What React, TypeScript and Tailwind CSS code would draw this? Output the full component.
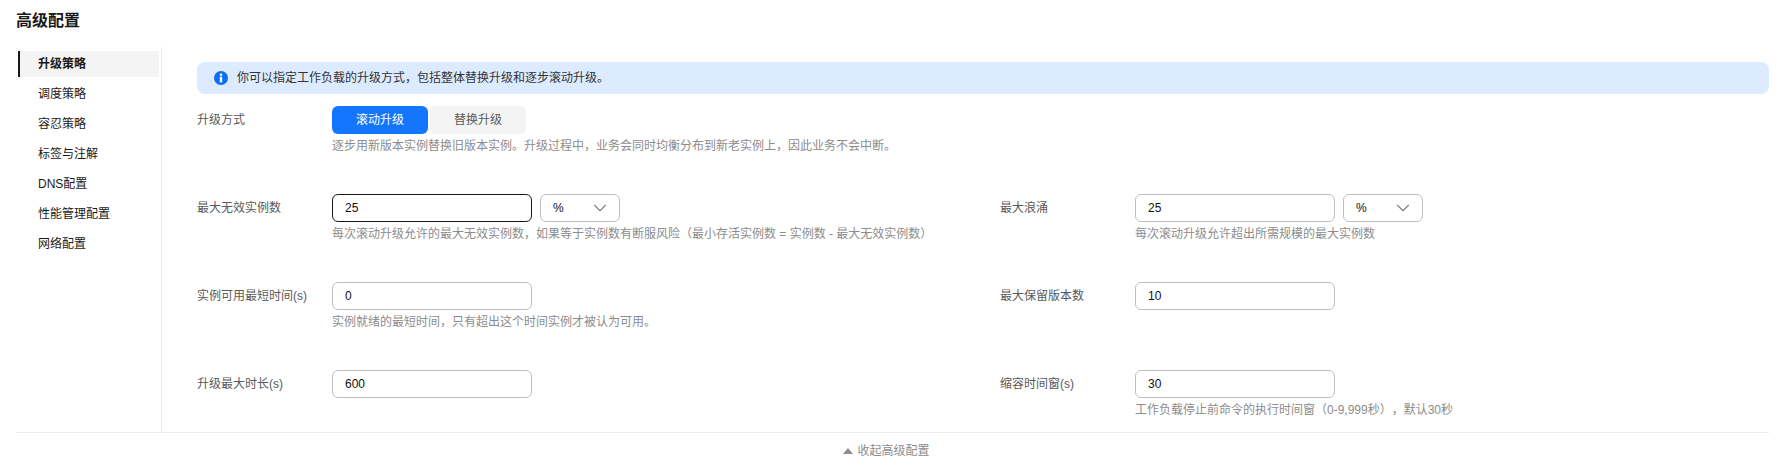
import { ChevronDown } from "lucide-react"

const navItems = ["升级策略", "调度策略", "容忍策略", "标签与注解", "DNS配置", "性能管理配置", "网络配置"]

function TextBox({ value, focused }: { value: string; focused?: boolean }) {
  return (
    <div
      className={`flex h-[28px] w-[200px] items-center rounded-md border pl-[12px] text-[12px] text-[#111] ${
        focused ? "border-[#191919]" : "border-[#c0c0c0]"
      }`}
    >
      {value}
    </div>
  )
}

function UnitSelect() {
  return (
    <div className="flex h-[28px] w-[80px] items-center justify-between rounded-md border border-[#c0c0c0] pl-[12px] pr-[8px] text-[12px] text-[#111]">
      <span>%</span>
      <ChevronDown size={22} strokeWidth={1.2} className="text-[#808080]" />
    </div>
  )
}

function Field({
  label,
  hint,
  children,
}: {
  label: string
  hint?: string
  children: React.ReactNode
}) {
  return (
    <div className="flex h-[88px]">
      <div className="w-[135px] shrink-0 pt-[5px] text-[12px] leading-[18px] text-[#595959]">{label}</div>
      <div>
        <div className="flex gap-[8px]">{children}</div>
        {hint && <div className="mt-[3px] text-[12px] leading-[18px] text-[#8c8c8c]">{hint}</div>}
      </div>
    </div>
  )
}

export default function App() {
  return (
    <div className="h-[465px] w-[1785px] overflow-hidden bg-white px-[16px] font-['Liberation_Sans','Noto_Sans_CJK_SC',sans-serif] [text-spacing-trim:space-all]">
      <div className="flex h-[47px] items-start pt-[10px] text-[16px] font-bold leading-[22px] text-[#191919]">高级配置</div>

      <div className="flex h-[386px] border-b border-[#ebebeb]">
        <nav className="w-[146px] shrink-0 border-r border-[#ebebeb] pl-[2px] pr-[2px] pt-[4px]">
          <ul className="flex flex-col gap-[4px]">
            {navItems.map((item, i) => (
              <li
                key={item}
                className={`flex h-[26px] items-center text-[12px] text-[#191919] ${
                  i === 0 ? "border-l-2 border-[#191919] bg-[#f4f4f4] pl-[18px] font-bold" : "pl-[20px]"
                }`}
              >
                {item}
              </li>
            ))}
          </ul>
        </nav>

        <div className="flex-1 pl-[35px] pt-[15px]">
          <div className="flex h-[32px] items-center gap-[9px] rounded-lg bg-[#dcebff] pl-[17px] text-[12px] text-[#333]">
            <svg width="14" height="14" viewBox="0 0 14 14" className="shrink-0">
              <circle cx="7" cy="7" r="7" fill="#0d6ff0" />
              <rect x="5.8" y="2.6" width="2.4" height="2.2" fill="#ffffff" />
              <rect x="5.8" y="5.8" width="2.4" height="5.6" fill="#ffffff" />
            </svg>
            <span>你可以指定工作负载的升级方式，包括整体替换升级和逐步滚动升级。</span>
          </div>

          <div className="mt-[12px] h-[88px]">
            <div className="flex">
              <div className="w-[135px] shrink-0 pt-[5px] text-[12px] leading-[18px] text-[#595959]">升级方式</div>
              <div>
                <div className="flex gap-[2px] text-[12px]">
                  <button className="h-[28px] w-[96px] rounded-md bg-[#1476ff] text-white">滚动升级</button>
                  <button className="h-[28px] w-[96px] rounded-md bg-[#f4f4f4] text-[#595959]">替换升级</button>
                </div>
                <div className="mt-[3px] text-[12px] leading-[18px] text-[#8c8c8c]">
                  逐步用新版本实例替换旧版本实例。升级过程中，业务会同时均衡分布到新老实例上，因此业务不会中断。
                </div>
              </div>
            </div>
          </div>

          <div className="grid grid-cols-[803px_1fr]">
            <Field label="最大无效实例数" hint="每次滚动升级允许的最大无效实例数，如果等于实例数有断服风险（最小存活实例数 = 实例数 - 最大无效实例数）">
              <TextBox value="25" focused />
              <UnitSelect />
            </Field>
            <Field label="最大浪涌" hint="每次滚动升级允许超出所需规模的最大实例数">
              <TextBox value="25" />
              <UnitSelect />
            </Field>
            <Field label="实例可用最短时间(s)" hint="实例就绪的最短时间，只有超出这个时间实例才被认为可用。">
              <TextBox value="0" />
            </Field>
            <Field label="最大保留版本数">
              <TextBox value="10" />
            </Field>
            <Field label="升级最大时长(s)">
              <TextBox value="600" />
            </Field>
            <Field label="缩容时间窗(s)" hint="工作负载停止前命令的执行时间窗（0-9,999秒），默认30秒">
              <TextBox value="30" />
            </Field>
          </div>
        </div>
      </div>

      <div className="flex h-[32px] items-center justify-center gap-[4px] pr-[12px] pt-[4px] text-[12px] text-[#8c8c8c]">
        <svg width="10" height="6" viewBox="0 0 10 6">
          <path d="M5 0 L10 6 L0 6 Z" fill="#8c8c8c" />
        </svg>
        <span>收起高级配置</span>
      </div>
    </div>
  )
}
